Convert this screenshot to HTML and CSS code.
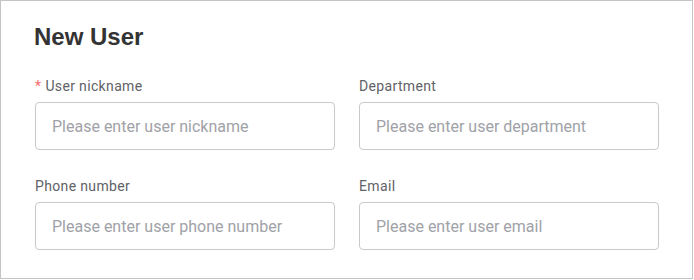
FILE: index.html
```html
<!DOCTYPE html>
<html>

<head>
  <title>New User</title>
  <link rel="stylesheet" href="styles.css">
</head>

<body>
  <div class="panel">
    <h1>New User</h1>

    <form class="user-form">
      <div class="field">
        <label class="required">User nickname</label>
        <input placeholder="Please enter user nickname">
      </div>

      <div class="field">
        <label>Department</label>
        <input placeholder="Please enter user department">
      </div>

      <div class="field">
        <label>Phone number</label>
        <input placeholder="Please enter user phone number">
      </div>

      <div class="field">
        <label>Email</label>
        <input placeholder="Please enter user email">
      </div>
    </form>
  </div>
</body>

</html>
```

FILE: styles.css
```css
body {
  font-family: Roboto, sans-serif;
  margin: 0;
  color: #333333;
  background: #ffffff;
}

.panel {
  box-sizing: border-box;
  width: 693px;
  height: 279px;
  padding: 21px 33px 28px;
  border: 1px solid #c4c4c4;
}

h1 {
  font-family: "Liberation Sans", Arial, sans-serif;
  font-size: 24px;
  font-weight: 700;
  line-height: 30px;
  margin: 0 0 24px;
  color: #333333;
}

.user-form {
  display: grid;
  grid-template-columns: 300px 300px;
  column-gap: 24px;
  row-gap: 26px;
  margin-left: 1px;
}

label {
  display: block;
  font-size: 14px;
  line-height: 20px;
  letter-spacing: 0.35px;
  margin-bottom: 6px;
  color: #606266;
}

.required::before {
  content: "*";
  color: #f56c6c;
  margin-right: 4px;
}

input {
  box-sizing: border-box;
  display: block;
  width: 300px;
  height: 48px;
  padding: 0 16px;
  font-family: Roboto, sans-serif;
  font-size: 16px;
  color: #333333;
  border: 1px solid #c8c9cc;
  border-radius: 4px;
  background: #ffffff;
  outline: none;
}

input::placeholder {
  color: #a0a2a8;
}
```
